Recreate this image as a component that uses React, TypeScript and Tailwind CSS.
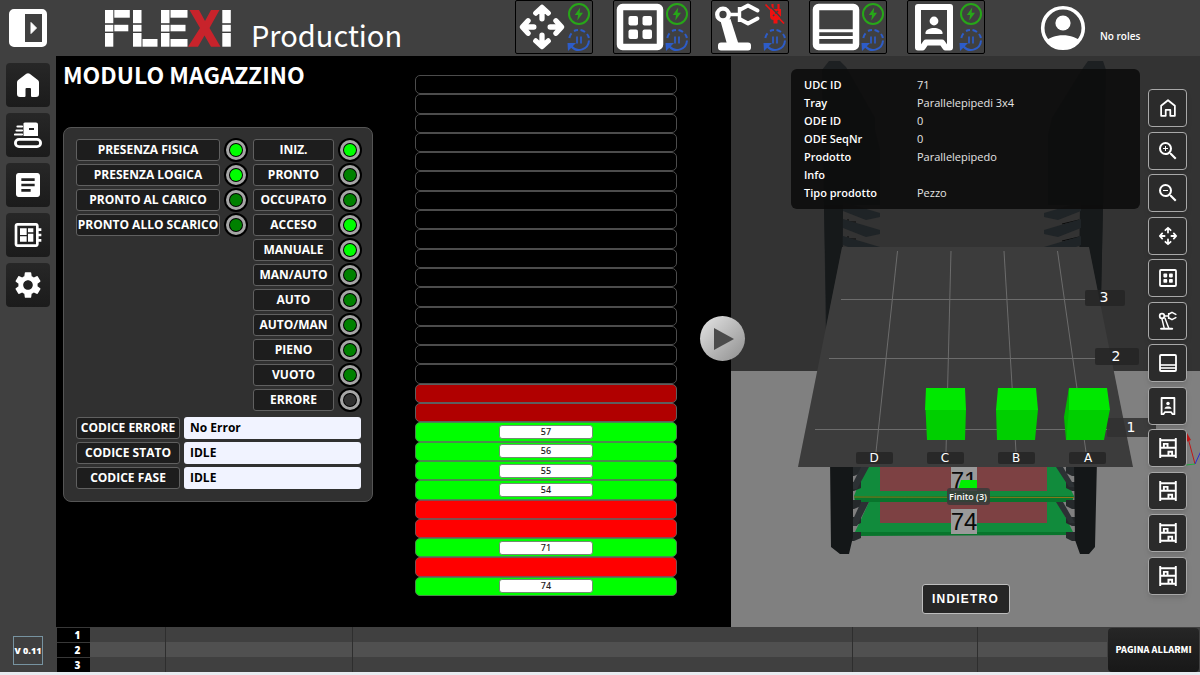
import React from "react";
import { MdArticle, MdDeveloperBoard, MdSettings, MdZoomIn, MdZoomOut } from "react-icons/md";

type IconProps = { className?: string };

/* ---------- drawings ---------- */

function PanelToggleIcon({ className }: IconProps) {
  return (
    <svg viewBox="0 0 38 38" className={className} aria-hidden="true">
      <path
        fillRule="evenodd"
        fill="#fff"
        d="M5 0H33a5 5 0 0 1 5 5V33a5 5 0 0 1-5 5H5a5 5 0 0 1-5-5V5a5 5 0 0 1 5-5ZM16 5V33H33V5Z"
      />
      <path fill="#fff" stroke="#fff" strokeLinejoin="round" d="M22 13.500V24.500L27.500 19Z" />
    </svg>
  );
}

function FlexiLogo({ className }: IconProps) {
  const stem = (x: number, w: number) => (
    <>
      <rect x={x} y="0" width={w} height="13.200" />
      <rect x={x} y="14.800" width={w} height="6.800" />
      <rect x={x} y="23" width={w} height="13.700" />
    </>
  );
  return (
    <svg viewBox="0 0 126 37" className={className} role="img" aria-label="FLEXI">
      <g fill="#fff">
        {stem(0, 8.3)}
        <rect x="9.300" y="0" width="15.500" height="7.700" />
        <rect x="9.300" y="14.800" width="14" height="6.500" />
        {stem(28, 8.5)}
        <rect x="37.500" y="29" width="15" height="7.700" />
        {stem(56, 8.5)}
        <rect x="65.500" y="0" width="17" height="7.700" />
        <rect x="65.500" y="14.800" width="15" height="6.500" />
        <rect x="65.500" y="29" width="17" height="7.700" />
        {stem(117.3, 8.5)}
      </g>
      <path
        fill="#c8232b"
        d="M84.500 0H94L100 11L106 0H114.500L104.500 18L115.500 36.700H106L99.500 25.500L93 36.700H83L95 18Z"
      />
    </svg>
  );
}

function HomeSolidIcon({ className }: IconProps) {
  return (
    <svg viewBox="0 0 28 28" className={className} aria-hidden="true">
      <path
        fill="#fff"
        d="M12.300 2.800a2.800 2.800 0 0 1 3.400 0L23.800 9a3 3 0 0 1 1.200 2.400V23a3 3 0 0 1-3 3H18a1 1 0 0 1-1-1V18a1 1 0 0 0-1-1H12.500a1 1 0 0 0-1 1V25a1 1 0 0 1-1 1H6a3 3 0 0 1-3-3V11.400A3 3 0 0 1 4.200 9Z"
      />
    </svg>
  );
}

function ConveyorIcon({ className }: IconProps) {
  return (
    <svg viewBox="0 0 28 28" className={className} aria-hidden="true">
      <path
        fill="#fff"
        fillRule="evenodd"
        d="M11 1.500H22a2 2 0 0 1 2 2V15H9.500V3.500a1.500 1.500 0 0 1 1.500-2ZM15 7V9H20V7Z"
      />
      <path stroke="#fff" strokeWidth="2.200" strokeLinecap="round" d="M3.500 5.500H8M2.500 9.500H8M1 13.500H8" />
      <rect x="1.400" y="18.400" width="25.200" height="7.200" rx="3.600" fill="none" stroke="#fff" strokeWidth="2.800" />
    </svg>
  );
}

function MoveIcon({ className, weight }: IconProps & { weight: number }) {
  return (
    <svg viewBox="0 0 50 50" className={className} aria-hidden="true">
      <path
        fill="none"
        stroke="#fff"
        strokeWidth={weight}
        strokeLinecap="round"
        strokeLinejoin="round"
        d="M25 16.500V6M18.500 10.500L25 4.500L31.500 10.500M25 33.500V44M18.500 39.500L25 45.500L31.500 39.500M16.500 25H6M10.500 18.500L4.500 25L10.500 31.500M33.500 25H44M39.500 18.500L45.500 25L39.500 31.500"
      />
    </svg>
  );
}

function TrayGridIcon({ className, weight }: IconProps & { weight: number }) {
  return (
    <svg viewBox="0 0 50 50" className={className} aria-hidden="true">
      <rect x="5" y="5" width="40" height="40" rx="2.500" fill="none" stroke="#fff" strokeWidth={weight} />
      <g fill="#fff">
        <rect x="13.500" y="14" width="9.500" height="9.500" rx="2" />
        <rect x="27.500" y="14" width="9.500" height="9.500" rx="2" />
        <rect x="13.500" y="27.500" width="9.500" height="9.500" rx="2" />
        <rect x="27.500" y="27.500" width="9.500" height="9.500" rx="2" />
      </g>
    </svg>
  );
}

function RobotIcon({ className, solid }: IconProps & { solid: boolean }) {
  return (
    <svg viewBox="0 0 50 50" className={className} aria-hidden="true">
      <circle cx="10" cy="12.500" r="5.800" fill="none" stroke="#fff" strokeWidth="4.300" />
      <path fill="none" stroke="#fff" strokeWidth="3.400" d="M17 12.500H27M26.500 5V20" />
      <path
        fill="none"
        stroke="#fff"
        strokeWidth="4"
        strokeLinecap="round"
        strokeLinejoin="round"
        d="M27.500 7.500L35 3.500L44.500 8.500M27.500 17.500L35 21.500L44.500 16.500"
      />
      {solid ? (
        <path fill="#fff" d="M7.500 19L17.500 17L25.500 42H14Z" />
      ) : (
        <path fill="none" stroke="#fff" strokeWidth="3.600" d="M9.500 18L15.500 43M17 17L27 43" />
      )}
      <rect x="5" y={solid ? 40.5 : 42} width="33" height={solid ? 8 : 5} rx="3" fill="#fff" />
    </svg>
  );
}

function BayIcon({ className, bold }: IconProps & { bold: boolean }) {
  return (
    <svg viewBox="0 0 50 50" className={className} aria-hidden="true">
      <rect x="5" y="5" width="40" height="40" rx="2.500" fill="none" stroke="#fff" strokeWidth={bold ? 6.5 : 4.5} />
      <path stroke="#fff" strokeWidth={bold ? 3 : 4} d={bold ? "M5 28.800H45" : "M5 30H45"} />
      <path stroke="#fff" strokeWidth={bold ? 3 : 4} d={bold ? "M5 35.500H45" : "M5 37.500H45"} />
    </svg>
  );
}

function OperatorIcon({ className, weight }: IconProps & { weight: number }) {
  return (
    <svg viewBox="0 0 50 50" className={className} aria-hidden="true">
      <path
        fill="none"
        stroke="#fff"
        strokeWidth={weight}
        strokeLinejoin="round"
        d="M9 5H41V45.500H36.500L33 40.500H17L13.500 45.500H9Z"
      />
      <circle cx="25" cy="19" r="4.400" fill="#fff" />
      <path fill="#fff" d="M16.500 32V30.500C17.500 24.500 32.500 24.500 33.500 30.500V32Z" />
    </svg>
  );
}

function ShelfIcon({ className }: IconProps) {
  return (
    <svg viewBox="0 0 24 24" className={className} aria-hidden="true">
      <path
        fill="none"
        stroke="#fff"
        strokeWidth="2.100"
        d="M3.500 1V23M20.500 1V23M3.500 3.500H20.500M3.500 11.800H20.500M3.500 20.500H20.500M7.500 11.500V7.500H11.500V11.500M12.500 20V16H16.500V20"
      />
    </svg>
  );
}

function HomeLineIcon({ className }: IconProps) {
  return (
    <svg viewBox="0 0 24 24" className={className} aria-hidden="true">
      <path
        fill="none"
        stroke="#fff"
        strokeWidth="1.900"
        strokeLinejoin="round"
        d="M4.500 9.500L12 3.500L19.500 9.500V20.500H14.500V14H9.500V20.500H4.500Z"
      />
    </svg>
  );
}

function PowerOnIcon({ className }: IconProps) {
  return (
    <svg viewBox="0 0 24 24" className={className} role="img" aria-label="Alimentato">
      <circle cx="12" cy="12" r="10" fill="none" stroke="#27a718" strokeWidth="2" />
      <path fill="#27a718" d="M13.200 5.500L7.800 13H11L10.300 18.500L16 10.800H12.600Z" />
    </svg>
  );
}

function PowerOffIcon({ className }: IconProps) {
  return (
    <svg viewBox="0 0 24 24" className={className} role="img" aria-label="Non alimentato">
      <path fill="#f01010" d="M7 7H18V14C18 17 15.500 18 14.500 18V21.500H10.500V18C9 18 7 17 7 14Z" />
      <path stroke="#f01010" strokeWidth="2.200" d="M9.500 2V7M15.500 2V7" />
      <path stroke="#404040" strokeWidth="1.500" d="M4.500 1.500L22 20M10 14L15 9" />
      <path stroke="#f01010" strokeWidth="1.700" d="M2.500 2.500L21 21.500" />
    </svg>
  );
}

function CyclePauseIcon({ className }: IconProps) {
  return (
    <svg viewBox="0 0 24 24" className={className} role="img" aria-label="Ciclo in pausa">
      <path
        fill="none"
        stroke="#2d5cc8"
        strokeWidth="2"
        d="M2.300 10A10 10 0 0 1 4.500 5.300M7 3A10 10 0 0 1 11 2M13.500 2A10 10 0 0 1 18 4M20 6A10 10 0 0 1 21.900 10M22 12.500A10 10 0 0 1 4.500 18.500"
      />
      <path fill="#2d5cc8" d="M0.500 15H9L1 23Z" />
      <path stroke="#2d5cc8" strokeWidth="1.700" d="M10 8.500V15.500M14 8.500V15.500" />
    </svg>
  );
}

function AccountIcon({ className }: IconProps) {
  return (
    <svg viewBox="0 0 46 46" className={className} aria-hidden="true">
      <clipPath id="account-disc">
        <circle cx="23" cy="23" r="21" />
      </clipPath>
      <circle cx="23" cy="23" r="20.300" fill="none" stroke="#fff" strokeWidth="3.600" />
      <circle cx="23" cy="18" r="7.600" fill="#fff" />
      <g clipPath="url(#account-disc)">
        <path fill="#fff" d="M5 37C12 28 34 28 41 37V46H5Z" />
      </g>
    </svg>
  );
}

/* ---------- header ---------- */

const stations = [
  { name: "Movimentazione", icon: <MoveIcon weight={5.5} className="size-12" />, powered: true },
  { name: "Vassoi", icon: <TrayGridIcon weight={6.5} className="size-[50px]" />, powered: true },
  { name: "Robot", icon: <RobotIcon solid className="size-[50px]" />, powered: false },
  { name: "Baia", icon: <BayIcon bold className="size-[50px]" />, powered: true },
  { name: "Operatore", icon: <OperatorIcon weight={6} className="size-[50px]" />, powered: true },
];

function Header() {
  return (
    <header className="flex h-14 items-center bg-[#404040]">
      <button type="button" aria-label="Mostra pannello" className="ml-[9px] shrink-0">
        <PanelToggleIcon className="size-[38px]" />
      </button>
      <FlexiLogo className="ml-[58px] h-[37px] w-[126px] shrink-0" />
      <h1 className="ml-5 w-[264px] shrink-0 pt-[11px] font-['Noto_Sans_CJK_JP','Noto_Sans',sans-serif] text-[29px] leading-9">
        Production
      </h1>
      <div className="flex shrink-0 gap-5 self-start">
        {stations.map((s) => (
          <button
            key={s.name}
            type="button"
            aria-label={s.name}
            className="flex h-[54px] w-[78px] items-center rounded-xs border border-black pl-px"
          >
            <span className="flex w-[50px] shrink-0 justify-center">{s.icon}</span>
            <span className="flex shrink-0 flex-col gap-[2px]">
              {s.powered ? <PowerOnIcon className="size-6" /> : <PowerOffIcon className="size-6" />}
              <CyclePauseIcon className="size-6" />
            </span>
          </button>
        ))}
      </div>
      <div className="ml-auto flex w-[160px] shrink-0 items-center gap-[14px]">
        <AccountIcon className="size-[46px]" />
        <span className="pt-4 text-[10px] leading-4 font-semibold">No roles</span>
      </div>
    </header>
  );
}

/* ---------- sidebar ---------- */

const navigation = [
  { name: "Home", icon: <HomeSolidIcon className="size-7" /> },
  { name: "Nastro", icon: <ConveyorIcon className="size-7" /> },
  { name: "Ordini", icon: <MdArticle className="size-8" /> },
  { name: "Quadro", icon: <MdDeveloperBoard className="size-8" /> },
  { name: "Impostazioni", icon: <MdSettings className="size-8" /> },
];

function Sidebar() {
  return (
    <aside className="flex w-14 shrink-0 flex-col items-center bg-[#404040] pt-[7px] pb-[7px]">
      <nav className="flex flex-col gap-[6px]">
        {navigation.map((n) => (
          <a
            key={n.name}
            href="#"
            aria-label={n.name}
            className="flex size-11 items-center justify-center rounded-sm bg-linear-to-b from-[#272727] to-[#1b1b1b]"
          >
            {n.icon}
          </a>
        ))}
      </nav>
      <span className="mt-auto flex h-[29px] w-[30px] items-center justify-center border border-[#7793a0] text-[9px] font-extrabold whitespace-nowrap">
        V 0.11
      </span>
    </aside>
  );
}

/* ---------- status panel ---------- */

type Light = "on" | "off" | "none";

const presence: [string, Light][] = [
  ["PRESENZA FISICA", "on"],
  ["PRESENZA LOGICA", "on"],
  ["PRONTO AL CARICO", "off"],
  ["PRONTO ALLO SCARICO", "off"],
];

const states: [string, Light][] = [
  ["INIZ.", "on"],
  ["PRONTO", "off"],
  ["OCCUPATO", "off"],
  ["ACCESO", "on"],
  ["MANUALE", "on"],
  ["MAN/AUTO", "off"],
  ["AUTO", "off"],
  ["AUTO/MAN", "off"],
  ["PIENO", "off"],
  ["VUOTO", "off"],
  ["ERRORE", "none"],
];

const codes = [
  { id: "errore", label: "CODICE ERRORE", value: "No Error" },
  { id: "stato", label: "CODICE STATO", value: "IDLE" },
  { id: "fase", label: "CODICE FASE", value: "IDLE" },
];

const plate =
  "flex h-[22px] items-center justify-center rounded-[3px] border border-[#606060] bg-[#1d1d1d] text-[12px] leading-5 font-bold whitespace-nowrap";

const lightColor: Record<Light, string> = {
  on: "bg-[#00ff00]",
  off: "bg-[#008000]",
  none: "bg-[#303030]",
};

function LightRow({ label, light, width }: { label: string; light: Light; width: string }) {
  return (
    <li className="flex h-[25px] items-center gap-1">
      <span className={`${plate} ${width}`}>{label}</span>
      <span className="flex size-6 items-center justify-center rounded-full bg-black">
        <span className="flex size-5 items-center justify-center rounded-full bg-[#a6a6a6]">
          <span className="flex size-[14px] items-center justify-center rounded-full bg-black">
            <span className={`size-3 rounded-full ${lightColor[light]}`} />
          </span>
        </span>
      </span>
    </li>
  );
}

function StatusPanel() {
  return (
    <div className="rounded-lg border border-[#555] bg-[#303030] pt-[9px] pr-[10px] pb-3 pl-3">
      <div className="flex justify-between">
        <ul>
          {presence.map(([label, light]) => (
            <LightRow key={label} label={label} light={light} width="w-[144px]" />
          ))}
        </ul>
        <ul>
          {states.map(([label, light]) => (
            <LightRow key={label} label={label} light={light} width="w-[81px]" />
          ))}
        </ul>
      </div>
      <div className="mt-[5px] flex flex-col gap-[3px]">
        {codes.map((c) => (
          <div key={c.id} className="flex gap-1">
            <label htmlFor={c.id} className={`${plate} w-[104px]`}>
              {c.label}
            </label>
            <input
              id={c.id}
              readOnly
              defaultValue={c.value}
              className="h-[22px] w-[177px] rounded-[3px] bg-[#f1f3ff] px-[6px] pb-[2px] text-[12px] leading-5 font-bold text-black"
            />
          </div>
        ))}
      </div>
    </div>
  );
}

/* ---------- rack ---------- */

type Slot = { state: "free" | "locked" | "tray" | "busy"; tray?: number };

const slots: Slot[] = [
  ...Array.from({ length: 16 }, (): Slot => ({ state: "free" })),
  { state: "locked" },
  { state: "locked" },
  { state: "tray", tray: 57 },
  { state: "tray", tray: 56 },
  { state: "tray", tray: 55 },
  { state: "tray", tray: 54 },
  { state: "busy" },
  { state: "busy" },
  { state: "tray", tray: 71 },
  { state: "busy" },
  { state: "tray", tray: 74 },
];

const slotColor: Record<Slot["state"], string> = {
  free: "border-[#4c4c4c] bg-black",
  locked: "border-[#5e5e5e] bg-[#b00000]",
  tray: "border-[#4c8a4c] bg-[#00ff00]",
  busy: "border-[#7a5050] bg-[#ff0000]",
};

function Rack() {
  return (
    <ol className="flex w-[262px] flex-col pt-[19px] pb-[31px]">
      {slots.map((s, i) => (
        <li
          key={i}
          className={`flex flex-1 items-center justify-center rounded-[5px] border ${slotColor[s.state]}`}
        >
          {s.tray !== undefined && (
            <span className="flex h-[14px] w-[94px] items-center justify-center rounded-[3px] border border-[#6f8f6f] bg-white font-['Noto_Sans',sans-serif] text-[9px] leading-3 font-medium text-[#222]">
              {s.tray}
            </span>
          )}
        </li>
      ))}
    </ol>
  );
}

/* ---------- 3D view ---------- */

const teeth = [214, 231, 248];
const lowerTeeth = [467, 482, 500, 517, 532];

function Scene() {
  return (
    <svg
      viewBox="731 56 469 571"
      preserveAspectRatio="xMidYMid slice"
      className="absolute inset-0 size-full"
      fontFamily="'DejaVu Sans', sans-serif"
      aria-hidden="true"
    >
      <rect x="331" y="56" width="1269" height="315" fill="#333333" />
      <rect x="331" y="371" width="1269" height="256" fill="#808080" />

      {/* uprights */}
      <path fill="#1d2022" d="M822 70L829 61H840L846 67L875 118V130L880 150V205L860 247L852 340H826Z" />
      <path fill="#1d2022" d="M1106 70L1103 61H1088L1083 68L1052 118L1048 135V205L1068 247L1075 340H1100Z" />
      <path fill="#333333" d="M843 205H1081V247H843Z" />
      <path fill="#16191a" d="M824 205H843L841 340H827Z M1080 205H1103L1100 350H1078Z" />
      {teeth.map((y) => (
        <g key={y} fill="#1f2427">
          <path d={`M843 ${y - 12}L880 ${y - 1}V${y + 3}L866 ${y + 6}L843 ${y - 3}Z`} />
          <path d={`M1081 ${y - 12}L1044 ${y - 1}V${y + 3}L1058 ${y + 6}L1081 ${y - 3}Z`} />
          <path d={`M848 ${y + 5}V${y + 11}M844 ${y + 8}H856M1062 ${y + 10}L1079 ${y + 6}V${y + 12}`} stroke="#0a0a0a" fill="none" />
        </g>
      ))}

      {/* stored trays */}
      <path fill="#118b3c" d="M868 460H1056L1074 496H854Z" />
      <path fill="#7d4143" d="M880 460H1047V491H880Z" />
      <path fill="#08752c" d="M854 496H1074L1072 502H855Z" />
      <path stroke="#8a7a1a" d="M854 497L1074 497.500" />
      <path fill="#118b3c" d="M869 502H1058L1073 532H855Z" />
      <path fill="#7d4143" d="M880 502H1047V523H880Z" />
      <path fill="#08752c" d="M855 532H1073L1072 535L855 536Z" />
      <path fill="#9a9a9a" d="M951 460H977V491H951ZM951 509H977V534H951Z" />
      <g fontFamily="'Liberation Sans', sans-serif" fontSize="24" fill="#0a0a0a" textAnchor="middle">
        <text x="964" y="489">71</text>
        <text x="964" y="530">74</text>
      </g>
      <path fill="#00f000" d="M961 480H977V490H958Z" />

      {/* lower part of the frame */}
      {lowerTeeth.map((y) => (
        <g key={y} fill="#25292b">
          <path d={`M850 ${y}L861 ${y}V${y + 6}L854 ${y + 9}H848Z`} />
          <path d={`M1077 ${y}L1066 ${y}V${y + 6}L1072 ${y + 9}H1079Z`} />
        </g>
      ))}
      <path fill="#2c3134" d="M861 467H869L857 489H850ZM861 502H869L857 526H850ZM1056 467H1063L1075 487H1069ZM1056 502H1063L1075 523H1069Z" />
      <path fill="#141718" d="M830 460H853V537L849 554H840L831 547Z M1074 460H1097L1095 547L1089 554H1080L1075 540Z" />

      {/* tray in front */}
      <path fill="#3c3c3c" d="M842 247H1089L1133 467H798Z" />
      <path
        fill="none"
        stroke="#6c6c6c"
        d="M897.500 251L876 452M951 251L946 452M1004 251L1016 452M1057.500 251L1086 452M841 299.500H1086M829 358.500H1096M815 429.500H1110"
      />
      <g fill="#242424" fillOpacity="0.85">
        <rect x="1085" y="290" width="40" height="16" rx="2" />
        <rect x="1095" y="348" width="44" height="17" rx="2" />
        <rect x="856" y="452" width="37" height="12" rx="2" />
        <rect x="927" y="452" width="37" height="12" rx="2" />
        <rect x="998" y="452" width="37" height="12" rx="2" />
        <rect x="1069" y="452" width="37" height="12" rx="2" />
      </g>
      <rect x="1107" y="418" width="49" height="19" rx="2" fill="#303030" fillOpacity="0.85" />
      <g fill="#fff" textAnchor="middle" fontSize="14">
        <text x="1104" y="302">3</text>
        <text x="1116" y="361">2</text>
        <text x="1131" y="432">1</text>
      </g>
      <g fill="#fff" textAnchor="middle" fontSize="12">
        <text x="874" y="462">D</text>
        <text x="945" y="462">C</text>
        <text x="1016" y="462">B</text>
        <text x="1088" y="462">A</text>
      </g>

      {/* pieces */}
      <path fill="#00cf00" d="M925.500 409H966L965 440H927Z M996 409H1038L1035 440H997Z M1067 409H1110L1104 440H1066Z" />
      <path fill="#00e800" d="M926 388H965L966 410H925Z M998 388H1036L1038 410H996Z M1069 388H1107L1110 410H1067Z" />
      <path fill="#00bd00" d="M1069 388L1064 417L1066 440L1069 410Z" />

      <rect x="947" y="488" width="43" height="17" rx="3" fill="#3a3a3a" fillOpacity="0.88" />
      <text x="968" y="500" fontSize="9" fill="#fff" textAnchor="middle" fontFamily="'Open Sans', sans-serif" fontWeight="600">
        Finito (3)
      </text>

      {/* axes */}
      <path stroke="#c01818" d="M1195 464L1188 438" />
      <path fill="#c01818" d="M1187 433L1191 440L1186 442Z" />
      <path stroke="#2a2ad0" d="M1195 464L1201 451" />
      <path stroke="#20b040" d="M1186 465L1195 464" />
    </svg>
  );
}

const details = [
  ["UDC ID", "71"],
  ["Tray", "Parallelepipedi 3x4"],
  ["ODE ID", "0"],
  ["ODE SeqNr", "0"],
  ["Prodotto", "Parallelepipedo"],
  ["Info", ""],
  ["Tipo prodotto", "Pezzo"],
];

const tools = [
  { name: "Vista iniziale", icon: <HomeLineIcon className="size-[22px]" /> },
  { name: "Ingrandisci", icon: <MdZoomIn className="size-6" /> },
  { name: "Riduci", icon: <MdZoomOut className="size-6" /> },
  { name: "Movimentazione", icon: <MoveIcon weight={4.5} className="size-5" /> },
  { name: "Vassoi", icon: <TrayGridIcon weight={4.5} className="size-5" /> },
  { name: "Robot", icon: <RobotIcon solid={false} className="size-5" /> },
  { name: "Baia", icon: <BayIcon bold={false} className="size-5" /> },
  { name: "Operatore", icon: <OperatorIcon weight={4.5} className="size-5" /> },
  { name: "Magazzino 1", icon: <ShelfIcon className="size-[22px]" /> },
  { name: "Magazzino 2", icon: <ShelfIcon className="size-[22px]" /> },
  { name: "Magazzino 3", icon: <ShelfIcon className="size-[22px]" /> },
  { name: "Magazzino 4", icon: <ShelfIcon className="size-[22px]" /> },
];

function Viewer() {
  return (
    <section className="relative grid min-w-0 flex-1 grid-cols-[1fr_60px] pl-[60px]">
      <Scene />
      <div className="relative flex flex-col items-center justify-between pt-[13px] pb-[13px]">
        <dl className="w-full rounded-md bg-[#0c0c0c]/90 px-[13px] py-[7px] text-[11px] leading-[18px]">
          {details.map(([k, v]) => (
            <div key={k} className="flex">
              <dt className="w-[113px] font-semibold">{k}</dt>
              <dd className="text-[#e4e4e4]">{v}</dd>
            </div>
          ))}
        </dl>
        <button
          type="button"
          className="h-[30px] w-[88px] rounded-[3px] border border-[#bdbdbd] bg-[#262626] font-['Liberation_Sans',sans-serif] text-[12px] font-bold tracking-widest"
        >
          INDIETRO
        </button>
      </div>
      <div className="relative flex flex-col justify-between pt-[33px] pr-[13px] pb-8 pl-[8px]">
        {tools.map((t) => (
          <button
            key={t.name}
            type="button"
            aria-label={t.name}
            className="flex h-[38px] items-center justify-center rounded-[4px] border border-[#a8a8a8] bg-[#2b2b2b] shadow-md"
          >
            {t.icon}
          </button>
        ))}
      </div>
    </section>
  );
}

/* ---------- alarms ---------- */

function AlarmBar() {
  const rows = [
    { n: 1, shade: "bg-[#404040]" },
    { n: 2, shade: "bg-[#505050]" },
    { n: 3, shade: "bg-[#404040]" },
  ];
  return (
    <footer className="flex bg-[#404040]">
      <table className="ml-px min-w-0 flex-1 table-fixed border-separate border-spacing-0" aria-label="Allarmi">
        <colgroup>
          <col className="w-[33px]" />
          <col className="w-[76px]" />
          <col className="w-[187px]" />
          <col />
          <col className="w-[125px]" />
          <col className="w-[129px]" />
        </colgroup>
        <tbody>
          {rows.map((r) => (
            <tr key={r.n} className={`h-[15px] ${r.shade}`}>
              <th scope="row" className="border-t border-[#383838] bg-black p-0 pl-2 text-[10px] leading-[14px] font-extrabold">
                {r.n}
              </th>
              <td className="border-r border-[#2e2e2e] p-0" />
              <td className="border-r border-[#2e2e2e] p-0" />
              <td className="border-r border-[#2e2e2e] p-0" />
              <td className="border-r border-[#2e2e2e] p-0" />
              <td className="p-0" />
            </tr>
          ))}
        </tbody>
      </table>
      <button
        type="button"
        className="mx-px mt-px w-[91px] shrink-0 rounded-sm bg-linear-to-b from-[#262626] to-[#181818] font-['Noto_Sans_CJK_JP','Noto_Sans',sans-serif] text-[9px] leading-3 font-extrabold whitespace-nowrap"
      >
        PAGINA ALLARMI
      </button>
    </footer>
  );
}

/* ---------- page ---------- */

export default function App() {
  return (
    <div className="flex min-h-screen flex-col bg-[#404040] font-['Open_Sans','Noto_Sans',sans-serif] text-white">
      <Header />
      <div className="flex flex-1">
        <Sidebar />
        <main className="flex min-w-0 flex-1 flex-col">
          <div className="flex flex-1">
            <section className="relative z-10 flex w-[675px] shrink-0 gap-[42px] bg-black pl-[7px]">
              <div className="w-[310px]">
                <h2 className="pt-[2px] pb-[37px] font-['Noto_Sans_CJK_JP','Noto_Sans',sans-serif] text-[23px] leading-8 font-bold whitespace-nowrap">
                  MODULO MAGAZZINO
                </h2>
                <StatusPanel />
              </div>
              <Rack />
              <button
                type="button"
                aria-label="Avvia"
                className="absolute top-[260px] -right-[14px] flex size-[45px] items-center justify-center rounded-full bg-linear-to-br from-[#e6e6e6] to-[#8f8f8f]"
              >
                <svg viewBox="0 0 22 24" className="ml-[2px] h-6 w-[22px]" aria-hidden="true">
                  <path fill="#4b4b4b" d="M1 1L21 12L1 23Z" />
                </svg>
              </button>
            </section>
            <Viewer />
          </div>
          <AlarmBar />
        </main>
      </div>
      <div className="h-[3px] bg-[#e8ecf1]" />
    </div>
  );
}
